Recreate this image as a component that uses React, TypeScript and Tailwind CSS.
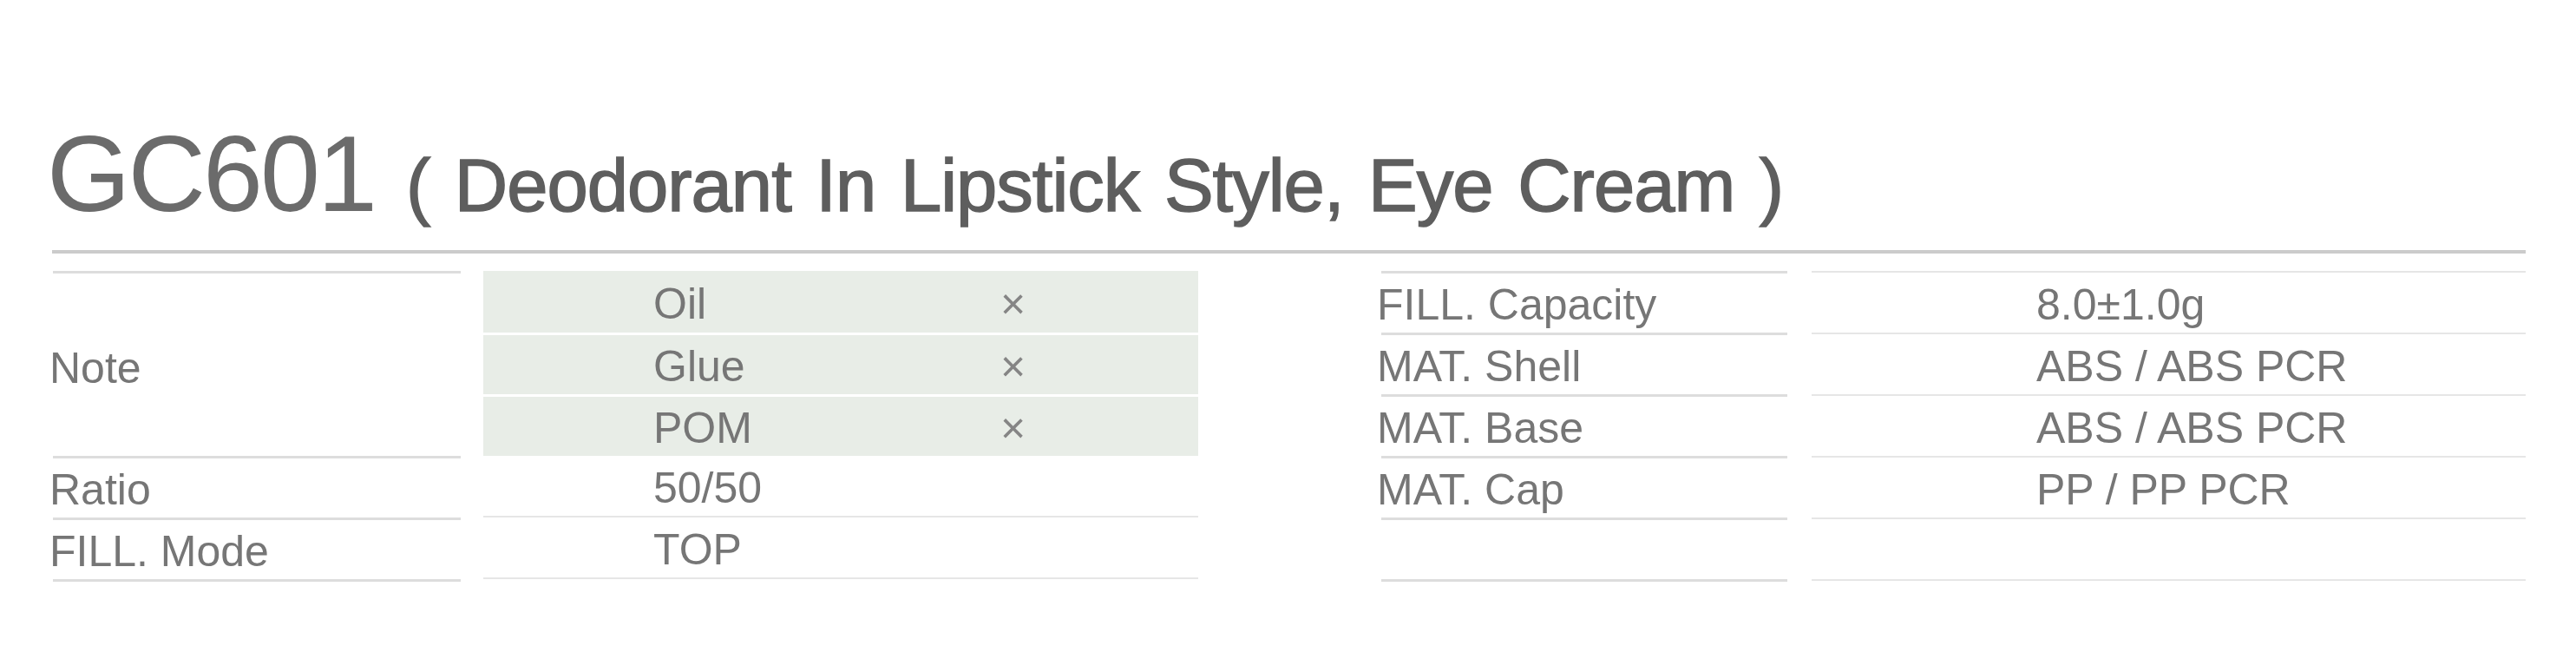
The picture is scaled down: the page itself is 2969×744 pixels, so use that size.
const noteRows = ["Oil", "Glue", "POM"];

const leftRows = [
  { label: "Ratio", value: "50/50" },
  { label: "FILL. Mode", value: "TOP" },
];

const rightRows = [
  { label: "FILL. Capacity", value: "8.0±1.0g" },
  { label: "MAT. Shell", value: "ABS / ABS PCR" },
  { label: "MAT. Base", value: "ABS / ABS PCR" },
  { label: "MAT. Cap", value: "PP / PP PCR" },
  { label: "", value: "" },
];

export default function App() {
  return (
    <div className="w-[2969px] h-[744px] bg-white pl-[60px] pt-[138px] font-['Liberation_Sans',Arial,sans-serif] text-[#767676]">
      {/* -- Title -- */}
      <div className="flex items-baseline leading-none">
        <span className="-ml-[6px] text-[124px] tracking-[-3px] text-[#6b6b6b]">GC601</span>
        <span className="ml-[36px] text-[85px] tracking-[-1px] [word-spacing:6px] text-[#5e5e5e] [-webkit-text-stroke:1.5px_#5e5e5e]">
          ( Deodorant In Lipstick Style, Eye Cream )
        </span>
      </div>

      <div className="mt-[26px] h-[4px] w-[2851px] bg-[#cbcbcb]" />

      {/* -- Spec table -- */}
      <div className="mt-[20px] flex text-[50px] leading-none">
        {/* left: labels */}
        <div className="ml-[1px] w-[470px]">
          <div className="flex h-[213px] items-center border-t-[3px] border-[#dddddd] pt-[8px]">
            <span className="-ml-[4px]">Note</span>
          </div>
          {leftRows.map((row, i) => (
            <div
              key={row.label}
              className={`flex h-[71px] items-center border-t-[3px] border-[#dddddd] pt-[4px] ${i === leftRows.length - 1 ? "border-b-[3px] h-[74px]" : ""}`}
            >
              <span className="-ml-[4px]">{row.label}</span>
            </div>
          ))}
        </div>

        {/* left: values */}
        <div className="ml-[26px] w-[824px]">
          {noteRows.map((item, i) => (
            <div
              key={item}
              className={`flex h-[71px] items-center bg-[#e8ede7] pl-[196px] pt-[4px] ${i > 0 ? "border-t-[3px] border-white" : ""}`}
            >
              <span className="w-[400px]">{item}</span>
              <span className="text-[#858585]">×</span>
            </div>
          ))}
          {leftRows.map((row) => (
            <div key={row.value} className="flex h-[71px] items-center border-b-2 border-[#e6e6e6] pl-[196px] pt-[4px]">
              {row.value}
            </div>
          ))}
        </div>

        {/* right: labels */}
        <div className="ml-[211px] w-[468px]">
          {rightRows.map((row, i) => (
            <div
              key={i}
              className={`flex h-[71px] items-center border-t-[3px] border-[#dddddd] pt-[4px] ${i === rightRows.length - 1 ? "border-b-[3px] h-[74px]" : ""}`}
            >
              <span className="-ml-[5px]">{row.label}</span>
            </div>
          ))}
        </div>

        {/* right: values */}
        <div className="ml-[28px] w-[823px]">
          {rightRows.map((row, i) => (
            <div
              key={i}
              className={`flex h-[71px] items-center border-t-2 border-[#e6e6e6] pl-[259px] pt-[4px] ${i === rightRows.length - 1 ? "border-b-2 h-[73px]" : ""}`}
            >
              {row.value}
            </div>
          ))}
        </div>
      </div>
    </div>
  );
}
